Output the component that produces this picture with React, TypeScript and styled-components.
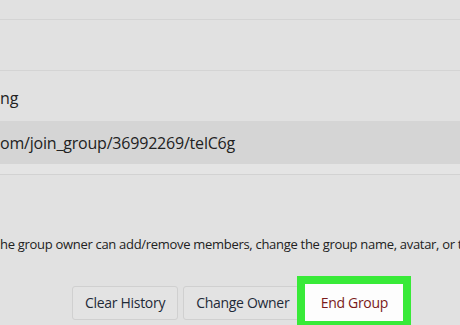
import styled, { createGlobalStyle } from 'styled-components';

const GlobalStyle = createGlobalStyle`
  html, body {
    margin: 0;
    padding: 0;
    background: #e1e1e1;
  }
  body {
    font-family: 'Open Sans', 'Noto Sans', sans-serif;
    color: #1f1f1f;
  }
`;

const Page = styled.div`
  width: 460px;
  height: 325px;
  overflow: hidden;
  background: #e1e1e1;
  display: flex;
  flex-direction: column;
`;

const Section = styled.div<{ $h: number }>`
  height: ${({ $h }) => $h}px;
  border-bottom: 1px solid #d4d4d4;
  flex-shrink: 0;
`;

const Label = styled.div`
  height: 50px;
  display: flex;
  align-items: center;
  padding-top: 4px;
  box-sizing: border-box;
  font-size: 16px;
  white-space: nowrap;
  color: #222;
  flex-shrink: 0;
`;

const LinkBox = styled.div`
  height: 43px;
  background: #d5d5d5;
  display: flex;
  align-items: center;
  font-size: 16px;
  letter-spacing: -0.2px;
  white-space: nowrap;
  color: #222;
  flex-shrink: 0;
`;

const LinkFoot = styled.div`
  height: 10px;
  background: #e4e4e4;
  border-bottom: 1px solid #d2d2d2;
  flex-shrink: 0;
`;

const Note = styled.p`
  margin: 60px 0 0;
  font-size: 13px;
  letter-spacing: -0.3px;
  white-space: nowrap;
  color: #222;
  flex-shrink: 0;
`;

const Actions = styled.div`
  margin-top: 23px;
  display: flex;
  align-items: center;
  gap: 5px;
  padding-left: 72px;
  flex-shrink: 0;
`;

const Button = styled.button`
  height: 34px;
  padding: 0 12px;
  border: 1px solid #d0d0d0;
  border-radius: 3px;
  background: #e3e3e3;
  font-family: inherit;
  font-size: 14px;
  letter-spacing: -0.3px;
  white-space: nowrap;
  color: #1e2a38;
`;

const Highlight = styled.div`
  margin-left: -10px;
  padding: 8px;
  background: #38ea38;
  display: flex;
`;

const DangerButton = styled(Button)`
  height: 37px;
  width: 98px;
  padding: 0;
  border: none;
  border-radius: 0;
  background: #fdfdfd;
  color: #7a1a1a;
`;

export default function App() {
  return (
    <>
      <GlobalStyle />
      <Page>
        <Section $h={19} />
        <Section $h={50} />
        <Label>ng</Label>
        <LinkBox>om/join_group/36992269/telC6g</LinkBox>
        <LinkFoot />
        <Note>he group owner can add/remove members, change the group name, avatar, or t</Note>
        <Actions>
          <Button>Clear History</Button>
          <Button>Change Owner</Button>
          <Highlight>
            <DangerButton>End Group</DangerButton>
          </Highlight>
        </Actions>
      </Page>
    </>
  );
}
